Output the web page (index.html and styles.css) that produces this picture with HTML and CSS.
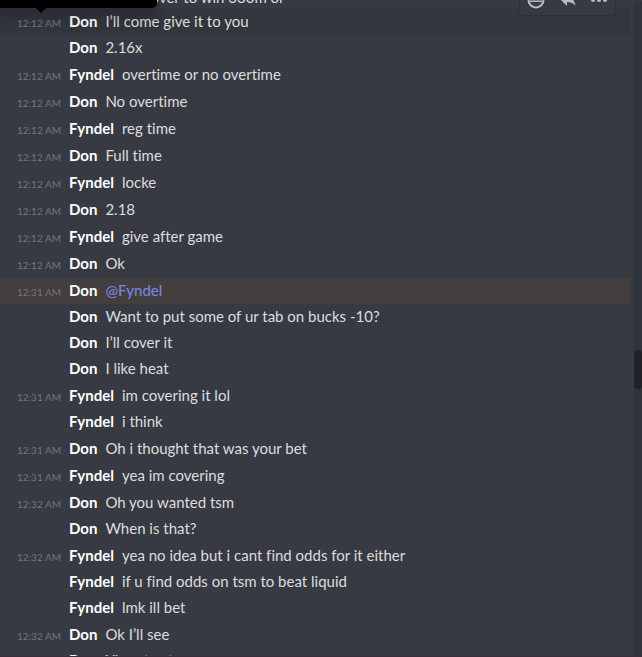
FILE: index.html
```html
<!DOCTYPE html>
<html lang="en">
<head>
<meta charset="utf-8">
<title>Don and Fyndel</title>
<link rel="stylesheet" href="styles.css">
</head>
<body>
<main class="chat">
<ol class="messages">
<li class="message cut"><b class="name">Don</b><span class="text">ill give over to win 330m or</span></li>
<li class="message active"><time>12:12 AM</time><b class="name">Don</b><span class="text">I’ll come give it to you</span></li>
<li class="message"><b class="name">Don</b><span class="text">2.16x</span></li>
<li class="message start"><time>12:12 AM</time><b class="name">Fyndel</b><span class="text">overtime or no overtime</span></li>
<li class="message start"><time>12:12 AM</time><b class="name">Don</b><span class="text">No overtime</span></li>
<li class="message start"><time>12:12 AM</time><b class="name">Fyndel</b><span class="text">reg time</span></li>
<li class="message start"><time>12:12 AM</time><b class="name">Don</b><span class="text">Full time</span></li>
<li class="message start"><time>12:12 AM</time><b class="name">Fyndel</b><span class="text">locke</span></li>
<li class="message start"><time>12:12 AM</time><b class="name">Don</b><span class="text">2.18</span></li>
<li class="message start"><time>12:12 AM</time><b class="name">Fyndel</b><span class="text">give after game</span></li>
<li class="message start"><time>12:12 AM</time><b class="name">Don</b><span class="text">Ok</span></li>
<li class="message start mentioned"><time>12:31 AM</time><b class="name">Don</b><span class="text"><a class="mention" href="#fyndel">@Fyndel</a></span></li>
<li class="message"><b class="name">Don</b><span class="text">Want to put some of ur tab on bucks -10?</span></li>
<li class="message"><b class="name">Don</b><span class="text">I’ll cover it</span></li>
<li class="message"><b class="name">Don</b><span class="text">I like heat</span></li>
<li class="message start"><time>12:31 AM</time><b class="name">Fyndel</b><span class="text">im covering it lol</span></li>
<li class="message"><b class="name">Fyndel</b><span class="text">i think</span></li>
<li class="message start"><time>12:31 AM</time><b class="name">Don</b><span class="text">Oh i thought that was your bet</span></li>
<li class="message start"><time>12:31 AM</time><b class="name">Fyndel</b><span class="text">yea im covering</span></li>
<li class="message start"><time>12:32 AM</time><b class="name">Don</b><span class="text">Oh you wanted tsm</span></li>
<li class="message"><b class="name">Don</b><span class="text">When is that?</span></li>
<li class="message start"><time>12:32 AM</time><b class="name">Fyndel</b><span class="text">yea no idea but i cant find odds for it either</span></li>
<li class="message"><b class="name">Fyndel</b><span class="text">if u find odds on tsm to beat liquid</span></li>
<li class="message"><b class="name">Fyndel</b><span class="text">lmk ill bet</span></li>
<li class="message start"><time>12:32 AM</time><b class="name">Don</b><span class="text">Ok I’ll see</span></li>
<li class="message"><b class="name">Don</b><span class="text">Yh not yet</span></li>
</ol>
<div class="track"><div class="thumb"></div></div>
<div class="tooltip"></div>
<div class="toolbar">
<button type="button" aria-label="Add reaction"><svg width="20" height="20" viewBox="0 0 20 20"><g fill="none" stroke="currentColor" stroke-width="2"><circle cx="10" cy="10" r="7.500"/><path d="M4 11.200h12" stroke-width="1.500"/></g></svg></button>
<button type="button" aria-label="Reply"><svg width="20" height="20" viewBox="0 0 20 20"><path d="M9 6V2L2 9l7 7v-4c4 0 6.500 1.300 8.500 4C16.500 11 14 6.500 9 6z" fill="currentColor"/></svg></button>
<button type="button" aria-label="More"><svg width="20" height="20" viewBox="0 0 20 20"><g fill="currentColor"><circle cx="4" cy="10" r="2"/><circle cx="10" cy="10" r="2"/><circle cx="16" cy="10" r="2"/></g></svg></button>
</div>
</main>
</body>
</html>
```
FILE: styles.css
```css
* {
  box-sizing: border-box;
}

body {
  margin: 0;
  background: #373a42;
  color: #dcddde;
  font: 15px/22px Lato, "Noto Sans", sans-serif;
  font-variant-ligatures: none;
}

.chat {
  position: relative;
  display: flex;
  gap: 4px;
  height: 100vh;
  overflow: hidden;
  border-bottom: 1px solid #3b303f;
}

.messages {
  flex: 1;
  margin: -16px 0 0;
  padding: 0;
  list-style: none;
}

.message {
  display: grid;
  grid-template-columns: 61px auto 1fr;
  column-gap: 8px;
  align-items: baseline;
  height: 26px;
  padding: 1px 0 3px;
  white-space: nowrap;
}

.cut {
  height: 25px;
  padding-top: 2px;
}

.start {
  margin-top: 1px;
}

.active {
  background: #33363d;
}

.mentioned {
  background: #423f3e;
}

time {
  grid-column: 1;
  color: #72767d;
  font-size: 10px;
  text-align: right;
}

.name {
  grid-column: 2;
  color: #fff;
}

.text {
  grid-column: 3;
}

.mention {
  color: #7785e0;
  font-weight: 500;
  text-decoration: none;
}

.track {
  flex: none;
  width: 8px;
  margin-top: 1px;
  padding-top: 349px;
  border-radius: 4px 0 0;
  background: #2f333a;
}

.thumb {
  height: 39px;
  border-radius: 4px;
  background: #202225;
}

.tooltip {
  position: absolute;
  top: -24px;
  left: -5px;
  width: 162px;
  height: 32px;
  border-radius: 5px;
  background: #000;
  box-shadow: 0 8px 16px rgba(0, 0, 0, 0.24);
}

.tooltip::after {
  content: "";
  position: absolute;
  top: 100%;
  left: 41px;
  border: 5px solid transparent;
  border-top-color: #000;
}

.toolbar {
  position: absolute;
  top: -16px;
  right: 26px;
  display: flex;
  width: 97px;
  height: 32px;
  border: 1px solid #2e3036;
  border-radius: 4px;
  background: #373a42;
}

.toolbar button {
  flex: 1;
  display: grid;
  place-items: center;
  padding: 0;
  border: 0;
  background: none;
  color: #b9bbbe;
}
```
